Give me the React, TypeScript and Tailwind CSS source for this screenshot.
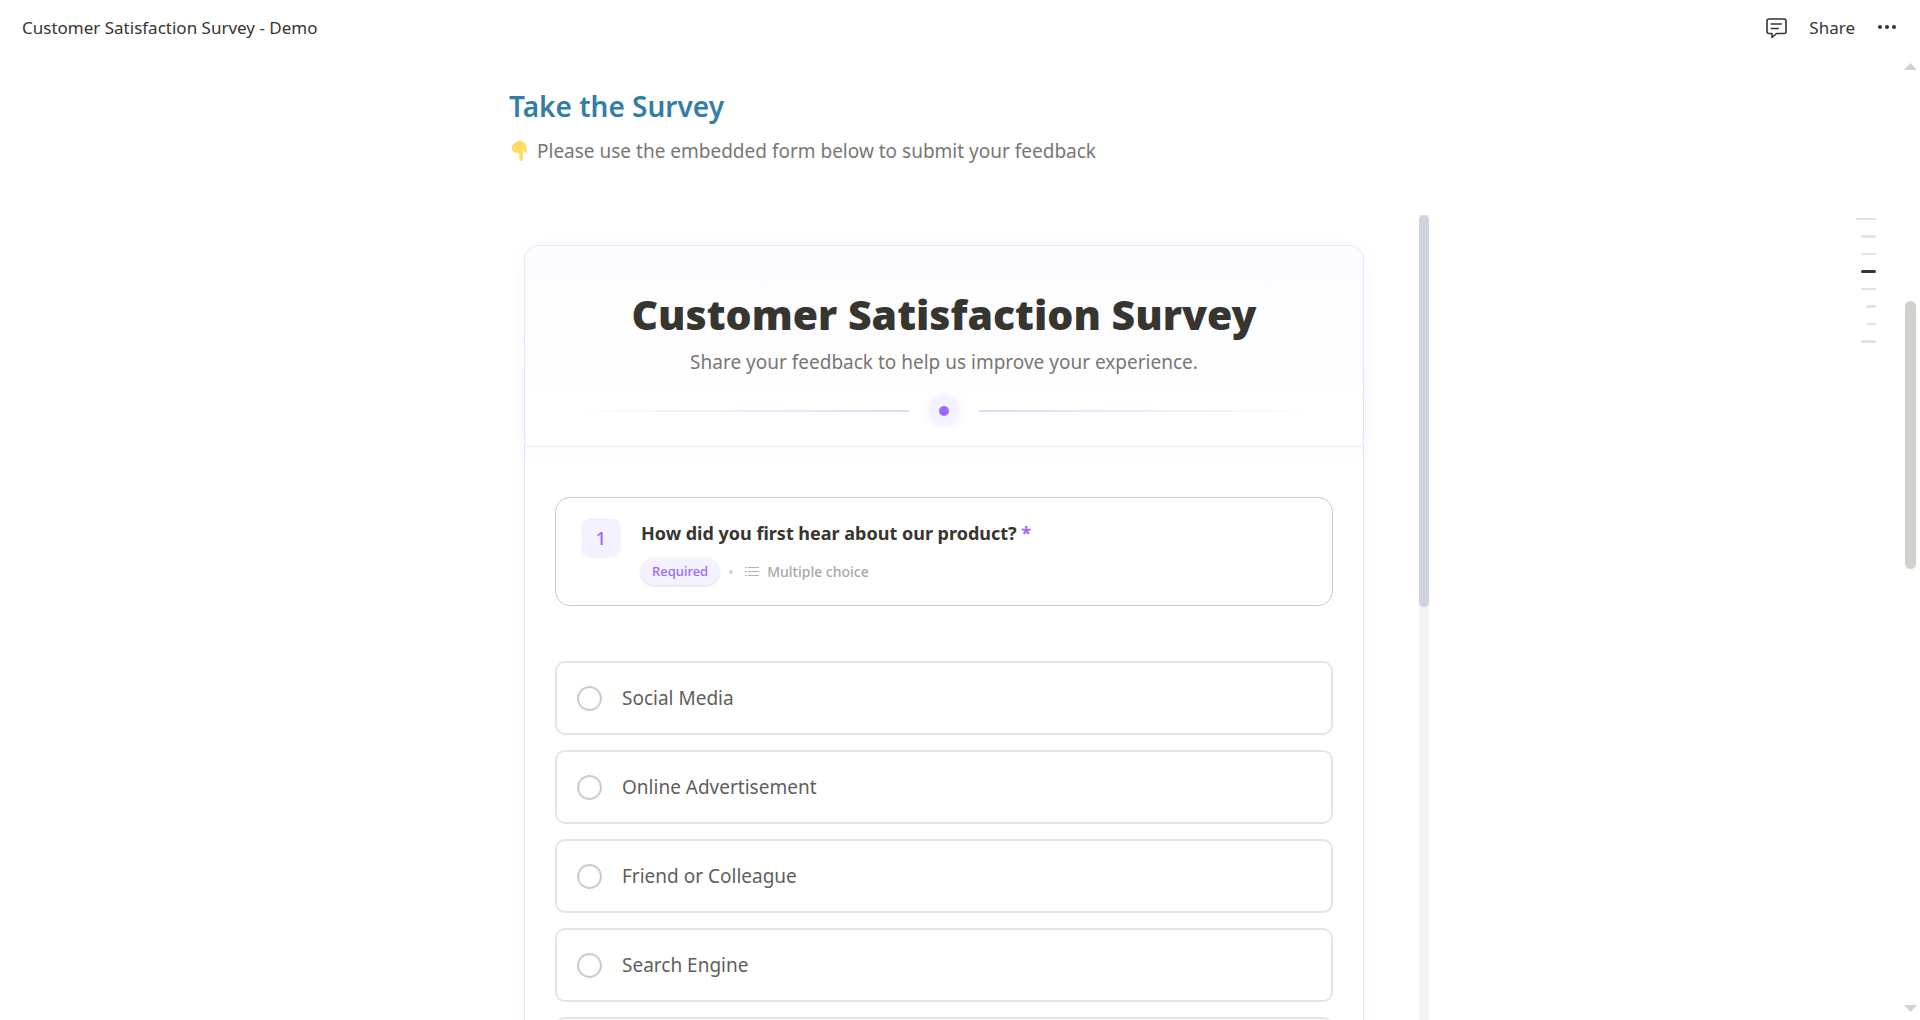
const options = ["Social Media", "Online Advertisement", "Friend or Colleague", "Search Engine", "Other"];

const outline = [
  { id: "overview", size: "w-5 h-[2px]" },
  { id: "goals", size: "w-[15px] h-[3px]" },
  { id: "details", size: "w-[15px] h-[2px]" },
  { id: "survey", size: "w-[15px] h-[3px]", active: true },
  { id: "results", size: "w-[15px] h-[2px]" },
  { id: "charts", size: "w-[10px] h-[3px]" },
  { id: "responses", size: "w-[10px] h-[2px]" },
  { id: "notes", size: "w-[15px] h-[3px]" },
];

function CommentIcon() {
  return (
    <svg width="21" height="21" viewBox="0 0 21 21" fill="none" stroke="#37352f" strokeWidth="1.6" strokeLinecap="round" strokeLinejoin="round">
      <path d="M3 1h15a2 2 0 0 1 2 2v10.500a2 2 0 0 1-2 2H10.500L6 19.500v-4H3a2 2 0 0 1-2-2V3a2 2 0 0 1 2-2z" />
      <path d="M5.300 6h10M5.300 10.500h7" />
    </svg>
  );
}

function PointDown() {
  return (
    <svg width="15" height="20" viewBox="0 0 15 20" fill="#ffdb5e">
      <path d="M3.500 1.500C4.800.4 6.300 0 8 0c3.600 0 6 2.300 6.200 5.500l.6 5c.1 1.600-1.700 1.900-2.300.5l-1.300-2.200-.4 9.500c0 2.200-3.300 2.200-3.400 0L7.200 12c-.9.600-2 .4-2.600-.4-1 .4-2 .1-2.600-.8C.9 10.600 0 9.600 0 8.300V6c0-1.900 1.700-3.200 3.500-4.500z" />
    </svg>
  );
}

function TopBar() {
  return (
    <header className="flex h-14 shrink-0 items-center justify-between pr-[23px] pl-[22px]">
      <span className="text-[17px] leading-6">Customer Satisfaction Survey - Demo</span>
      <div className="flex items-center gap-[22px]">
        <button aria-label="Comments">
          <CommentIcon />
        </button>
        <button className="text-[17px] leading-6">Share</button>
        <button aria-label="More">
          <svg width="20" height="6" viewBox="0 0 20 6" fill="#37352f">
            <circle cx="3" cy="2" r="2" />
            <circle cx="10" cy="2" r="2" />
            <circle cx="17" cy="2" r="2" />
          </svg>
        </button>
      </div>
    </header>
  );
}

function SurveyHeader() {
  return (
    <div className="flex flex-col items-center rounded-t-[15px] border-b border-[#f3f0ff] bg-linear-to-b from-[#fcfbff] to-white to-80% px-10 pt-10 pb-5 shadow-[0_5px_15px_rgba(155,105,250,0.03)]">
      <h1 className="text-[41px] leading-[56px] font-black">Customer Satisfaction Survey</h1>
      <p className="mt-[5px] text-[19px] leading-[30px] text-[#787774]">Share your feedback to help us improve your experience.</p>
      <div className="mt-[19px] flex w-full items-center gap-5">
        <div className="h-[2px] flex-1 bg-linear-to-r from-transparent to-[#e2d6fb]" />
        <div className="flex size-[30px] items-center justify-center rounded-full bg-[#f5f2ff] shadow-[0_0_10px_rgba(155,105,250,0.12)]">
          <div className="size-[10px] rounded-full bg-[#9b69fa]" />
        </div>
        <div className="h-[2px] flex-1 bg-linear-to-l from-transparent to-[#e2d6fb]" />
      </div>
    </div>
  );
}

function Question() {
  return (
    <div className="flex gap-5 rounded-[15px] border border-[#cbcbcb] px-[25px] py-5">
      <div className="flex size-10 shrink-0 items-center justify-center rounded-[10px] bg-[#f5f2ff] text-lg font-medium text-[#9b69fa]">1</div>
      <div>
        <h2 id="question-1" className="text-lg leading-[30px] font-bold">
          How did you first hear about our product? <span className="text-[#9b69fa]">*</span>
        </h2>
        <div className="mt-[10px] flex items-center">
          <span className="rounded-full bg-[#f5f2ff] px-[11px] text-[13px] leading-[27px] font-medium text-[#9b69fa] shadow-[0_1px_3px_rgba(0,0,0,0.15)]">
            Required
          </span>
          <span className="ml-[10px] size-1 rounded-full bg-[#d3d3d3]" />
          <svg className="ml-3" width="14" height="12" viewBox="0 0 14 12" fill="#b5b5b3">
            <path d="M0 1h2v1H0zM3 1h11v1H3zM0 5h2v1H0zM3 5h11v1H3zM0 9h2v1H0zM3 9h11v1H3z" />
          </svg>
          <span className="ml-2 text-[14px] leading-5 font-medium text-[#a9a9a7]">Multiple choice</span>
        </div>
      </div>
    </div>
  );
}

function Option({ label }: { label: string }) {
  return (
    <label className="flex h-[74px] shrink-0 cursor-pointer items-center gap-5 rounded-[10px] border-2 border-[#e5e5e5] px-5">
      <input
        type="radio"
        name="source"
        className="size-[25px] appearance-none rounded-full border-2 border-[#cccccc] checked:border-[#9b69fa]"
      />
      <span className="text-[19px] leading-[30px] text-[#5f5e5b]">{label}</span>
    </label>
  );
}

function EmbeddedForm() {
  return (
    <div className="mt-[49px] flex min-h-0 flex-1">
      <div className="min-w-0 flex-1 overflow-hidden px-[55px] pt-[30px]">
        <form className="rounded-[15px] border border-[#e9e3ff] shadow-[0_5px_20px_rgba(155,105,250,0.05)]">
          <SurveyHeader />
          <div className="px-[30px] pt-[50px] pb-[30px]">
            <Question />
            <div role="radiogroup" aria-labelledby="question-1" className="mt-[55px] flex flex-col gap-[15px]">
              {options.map((label) => (
                <Option key={label} label={label} />
              ))}
            </div>
          </div>
        </form>
      </div>
      <div className="w-[10px] shrink-0 bg-[#f3f4f6]">
        <div className="h-[392px] rounded-full bg-[#d0d4de]" />
      </div>
    </div>
  );
}

function PageScrollbar() {
  return (
    <div className="flex w-[22px] shrink-0 flex-col items-center justify-between pt-[7px] pb-2 pl-[3px]">
      <svg width="13" height="7" viewBox="0 0 13 7" fill="#d3d1cb">
        <path d="M6.500 0L13 7H0z" />
      </svg>
      <div className="flex w-full flex-1 justify-center pt-[231px]">
        <div className="h-[268px] w-[11px] rounded-full bg-[#d3d1cb]" />
      </div>
      <svg width="13" height="7" viewBox="0 0 13 7" fill="#d3d1cb">
        <path d="M0 0h13L6.500 7z" />
      </svg>
    </div>
  );
}

export default function App() {
  return (
    <div className="relative flex h-screen flex-col overflow-hidden bg-white font-['Noto_Sans','Open_Sans',sans-serif] text-[#37352f]">
      <TopBar />
      <div className="flex min-h-0 flex-1">
        <main className="mx-auto flex max-w-[960px] flex-1 flex-col">
          <div className="px-10 pt-[30px]">
            <h2 className="text-[28px] leading-10 font-semibold text-[#337ea9]">Take the Survey</h2>
            <p className="mt-[10px] flex items-center text-[19px] leading-[30px] text-[#787774]">
              <span className="mr-[10px] ml-[3px]">
                <PointDown />
              </span>
              Please use the embedded form below to submit your feedback
            </p>
          </div>
          <EmbeddedForm />
        </main>
        <PageScrollbar />
      </div>
      <nav aria-label="Outline" className="absolute top-[218px] right-11 flex flex-col items-end gap-[15px]">
        {outline.map(({ id, size, active }) => (
          <a key={id} href={`#${id}`} aria-label={id} className={`${size} rounded-[2px] ${active ? "bg-[#37352f]" : "bg-[#e3e2df]"}`} />
        ))}
      </nav>
    </div>
  );
}
